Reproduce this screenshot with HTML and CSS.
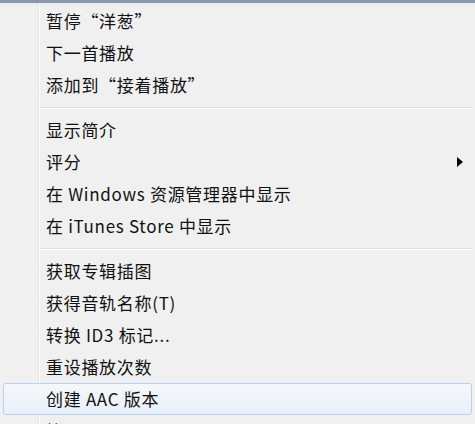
FILE: index.html
```html
<!DOCTYPE html>
<html lang="zh-CN">
<head>
    <meta charset="UTF-8">
    <title>右键菜单</title>
    <link rel="stylesheet" href="styles.css">
</head>
<body>
<div class="menu">
    <div class="top-edge"></div>
    <ul class="group">
        <li class="item">暂停“洋葱”</li>
        <li class="item">下一首播放</li>
        <li class="item">添加到“接着播放”</li>
    </ul>
    <div class="sep"></div>
    <ul class="group">
        <li class="item">显示简介</li>
        <li class="item has-sub">评分<em class="arrow"></em></li>
        <li class="item">在 Windows 资源管理器中显示</li>
        <li class="item">在 iTunes Store 中显示</li>
    </ul>
    <div class="sep"></div>
    <ul class="group">
        <li class="item">获取专辑插图</li>
        <li class="item">获得音轨名称(T)</li>
        <li class="item">转换 ID3 标记...</li>
        <li class="item">重设播放次数</li>
        <li class="item active">创建 AAC 版本</li>
        <li class="item">拷贝</li>
    </ul>
</div>
</body>
</html>
```

FILE: styles.css
```css
*{
    margin:0;
    padding:0;
    list-style: none;
    box-sizing: border-box;
}
body{
    background: #f0f0f0;
}
.menu{
    width: 475px;
    height: 424px;
    overflow: hidden;
    /* 左侧图标栏的竖线 */
    background: linear-gradient(to right, transparent 38px, #e2e3e3 38px, #e2e3e3 39px, #ffffff 39px, #ffffff 40px, transparent 40px), #f0f0f0;
    font-family: "Noto Sans CJK SC", "Liberation Sans", sans-serif;
    font-size: 17px;
    letter-spacing: 0.7px;
    color: #111;
}
.top-edge{
    height: 5px;
    border-top: 3px solid #8c98aa;
    background: #e6ecf4;
}
.item{
    position: relative;
    height: 32px;
    line-height: 32px;
    padding-left: 46px;
    white-space: nowrap;
}
.item.active{
    margin: 0 3px;
    padding-left: 42px;
    border: 1px solid #b9d1ee;
    border-radius: 3px;
    line-height: 30px;
    background: linear-gradient(rgba(246,250,254,0.75), rgba(230,240,252,0.75));
}
.sep{
    height: 13px;
    margin-left: 40px;
    margin-right: 3px;
    background: linear-gradient(to bottom, transparent 6px, #e0e0e0 6px, #e0e0e0 7px, #ffffff 7px, #ffffff 8px, transparent 8px);
}
.arrow{
    position: absolute;
    left: 457px;
    top: 11px;
    width: 0;
    height: 0;
    border-top: 5px solid transparent;
    border-bottom: 5px solid transparent;
    border-left: 6px solid #000;
}
```
